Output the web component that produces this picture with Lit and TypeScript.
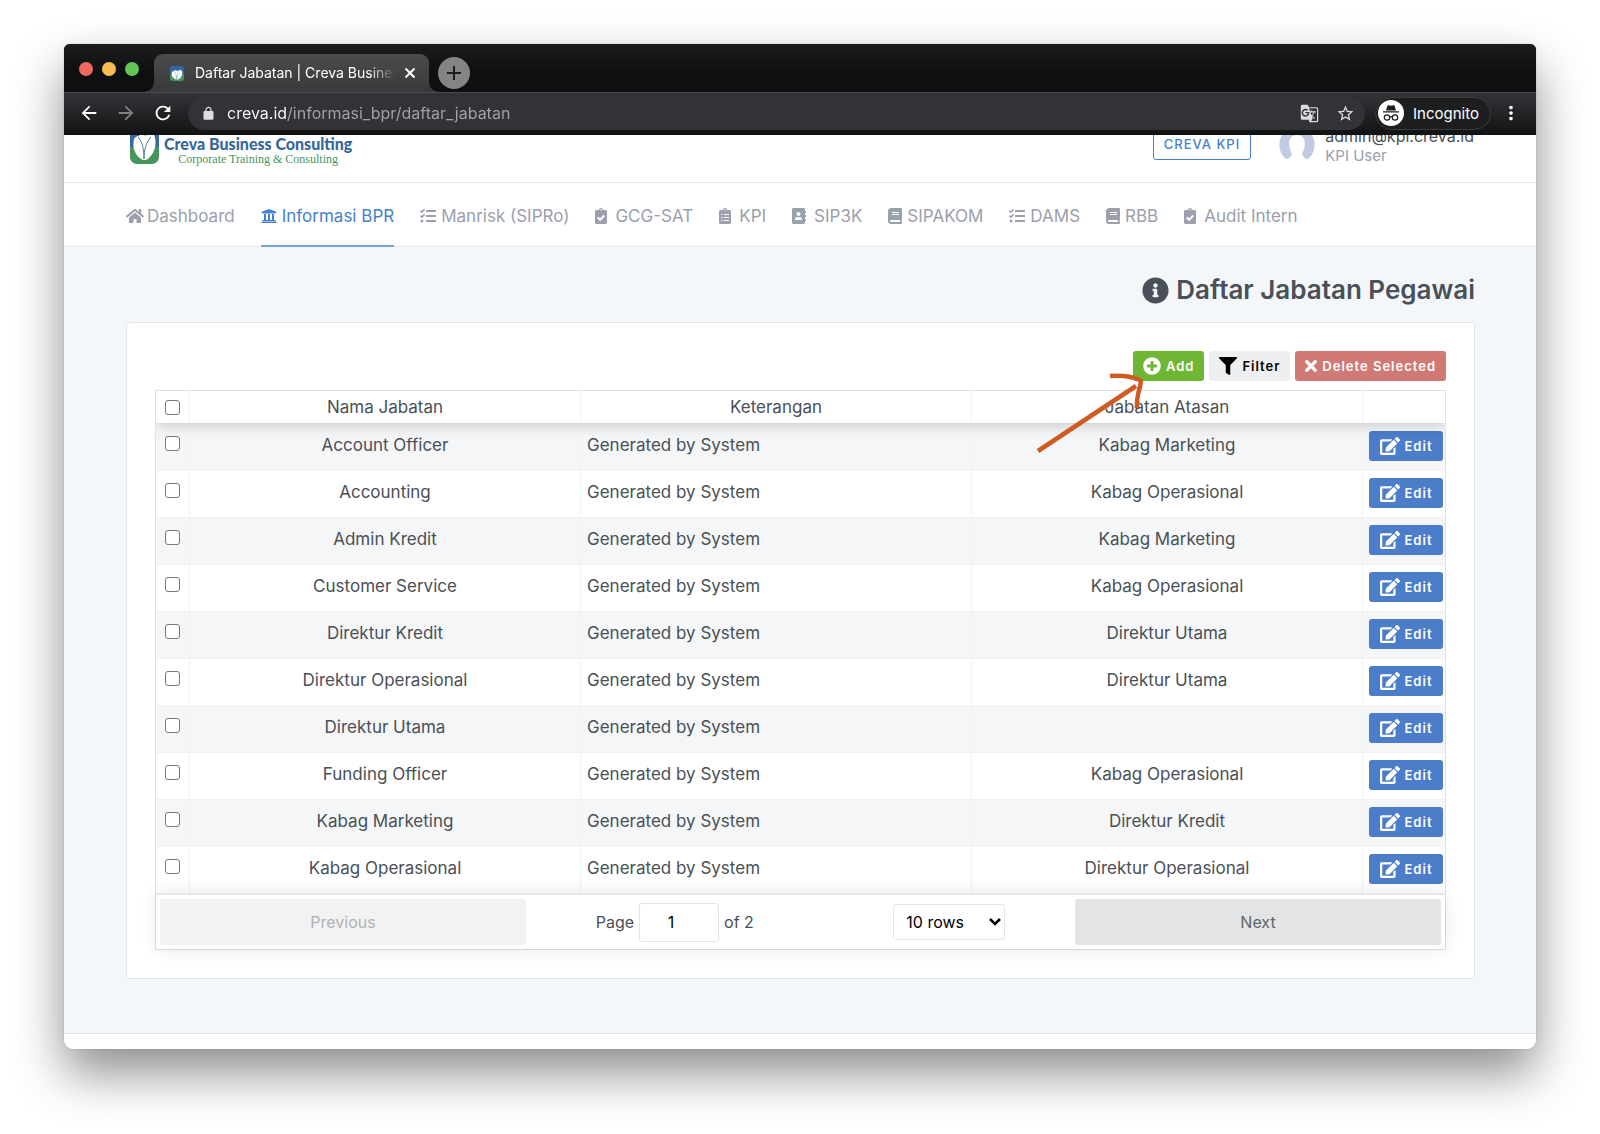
import { LitElement, html, css, svg, nothing } from "lit";
import { customElement, property, state } from "lit/decorators.js";
import { classMap } from "lit/directives/class-map.js";

type Glyph = { w: number; h: number; d: string };

const GLYPHS: Record<string, Glyph> = {
  home: { w: 576, h: 512, d: "M280.37 148.26L96 300.11V464a16 16 0 0 0 16 16l112.06-.29a16 16 0 0 0 15.92-16V368a16 16 0 0 1 16-16h64a16 16 0 0 1 16 16v95.64a16 16 0 0 0 16 16.05L464 480a16 16 0 0 0 16-16V300L295.67 148.26a12.19 12.19 0 0 0-15.3 0zM571.6 251.47L488 182.56V44.05a12 12 0 0 0-12-12h-56a12 12 0 0 0-12 12v72.61L318.47 43a48 48 0 0 0-61 0L4.34 251.47a12 12 0 0 0-1.6 16.9l25.5 31A12 12 0 0 0 45.15 301l235.22-193.74a12.19 12.19 0 0 1 15.3 0L530.9 301a12 12 0 0 0 16.9-1.6l25.5-31a12 12 0 0 0-1.7-16.93z" },
  bank: { w: 512, h: 512, d: "M496 128v16a8 8 0 0 1-8 8h-24v12c0 6.627-5.373 12-12 12H60c-6.627 0-12-5.373-12-12v-12H24a8 8 0 0 1-8-8v-16a8 8 0 0 1 4.941-7.392l232-88a7.996 7.996 0 0 1 6.118 0l232 88A8 8 0 0 1 496 128zm-24 304H40c-13.255 0-24 10.745-24 24v16a8 8 0 0 0 8 8h464a8 8 0 0 0 8-8v-16c0-13.255-10.745-24-24-24zM96 192v192H60c-6.627 0-12 5.373-12 12v20h416v-20c0-6.627-5.373-12-12-12h-36V192h-64v192h-64V192h-64v192h-64V192H96z" },
  tasks: { w: 512, h: 512, d: "M139.61 35.5a12 12 0 0 0-17 0L58.93 98.81l-22.7-22.12a12 12 0 0 0-17 0L3.53 92.41a12 12 0 0 0 0 17l47.59 47.4a12.78 12.78 0 0 0 17.61 0l15.59-15.62L156.52 69a12.09 12.09 0 0 0 .09-17zm0 159.19a12 12 0 0 0-17 0l-63.68 63.72-22.7-22.1a12 12 0 0 0-17 0L3.53 252a12 12 0 0 0 0 17L51 316.5a12.77 12.77 0 0 0 17.6 0l15.7-15.69 72.2-72.22a12 12 0 0 0 .09-16.9zM64 368c-26.49 0-48.59 21.5-48.59 48S37.53 464 64 464a48 48 0 0 0 0-96zm432 16H208a16 16 0 0 0-16 16v32a16 16 0 0 0 16 16h288a16 16 0 0 0 16-16v-32a16 16 0 0 0-16-16zm0-320H208a16 16 0 0 0-16 16v32a16 16 0 0 0 16 16h288a16 16 0 0 0 16-16V80a16 16 0 0 0-16-16zm0 160H208a16 16 0 0 0-16 16v32a16 16 0 0 0 16 16h288a16 16 0 0 0 16-16v-32a16 16 0 0 0-16-16z" },
  check: { w: 384, h: 512, d: "M336 64h-80c0-35.3-28.7-64-64-64s-64 28.7-64 64H48C21.5 64 0 85.5 0 112v352c0 26.5 21.5 48 48 48h288c26.5 0 48-21.5 48-48V112c0-26.5-21.5-48-48-48zM192 40c13.3 0 24 10.7 24 24s-10.7 24-24 24-24-10.7-24-24 10.7-24 24-24zm121.2 231.8l-143 141.8c-4.7 4.7-12.3 4.6-17-.1l-82.6-83.3c-4.7-4.7-4.6-12.3.1-17L99.1 285c4.7-4.7 12.3-4.6 17 .1l46 46.4 106-105.2c4.7-4.7 12.3-4.6 17 .1l28.2 28.4c4.7 4.8 4.6 12.3-.1 17z" },
  list: { w: 384, h: 512, d: "M336 64h-80c0-35.3-28.7-64-64-64s-64 28.7-64 64H48C21.5 64 0 85.5 0 112v352c0 26.5 21.5 48 48 48h288c26.5 0 48-21.5 48-48V112c0-26.5-21.5-48-48-48zM96 424c-13.3 0-24-10.7-24-24s10.7-24 24-24 24 10.7 24 24-10.7 24-24 24zm0-96c-13.3 0-24-10.7-24-24s10.7-24 24-24 24 10.7 24 24-10.7 24-24 24zm0-96c-13.3 0-24-10.7-24-24s10.7-24 24-24 24 10.7 24 24-10.7 24-24 24zm96-192c13.3 0 24 10.7 24 24s-10.7 24-24 24-24-10.7-24-24 10.7-24 24-24zm128 368c0 4.4-3.6 8-8 8H168c-4.4 0-8-3.6-8-8v-16c0-4.4 3.6-8 8-8h144c4.4 0 8 3.6 8 8v16zm0-96c0 4.4-3.6 8-8 8H168c-4.4 0-8-3.6-8-8v-16c0-4.4 3.6-8 8-8h144c4.4 0 8 3.6 8 8v16zm0-96c0 4.4-3.6 8-8 8H168c-4.4 0-8-3.6-8-8v-16c0-4.4 3.6-8 8-8h144c4.4 0 8 3.6 8 8v16z" },
  contacts: { w: 448, h: 512, d: "M436 160c6.6 0 12-5.4 12-12v-40c0-6.6-5.4-12-12-12h-20V48c0-26.5-21.5-48-48-48H48C21.5 0 0 21.5 0 48v416c0 26.5 21.5 48 48 48h320c26.5 0 48-21.5 48-48v-48h20c6.6 0 12-5.4 12-12v-40c0-6.6-5.4-12-12-12h-20v-64h20c6.6 0 12-5.4 12-12v-40c0-6.6-5.4-12-12-12h-20v-64h20zm-228-32c35.3 0 64 28.7 64 64s-28.7 64-64 64-64-28.7-64-64 28.7-64 64-64zm112 236.8c0 10.6-10 19.2-22.4 19.2H118.4C106 384 96 375.4 96 364.8v-19.2c0-31.8 30.1-57.6 67.2-57.6h5c12.3 5.1 25.7 8 39.8 8s27.6-2.9 39.8-8h5c37.1 0 67.2 25.8 67.2 57.6v19.2z" },
  book: { w: 448, h: 512, d: "M448 360V24c0-13.3-10.7-24-24-24H96C43 0 0 43 0 96v320c0 53 43 96 96 96h328c13.3 0 24-10.7 24-24v-16c0-7.5-3.5-14.3-8.9-18.7-4.2-15.4-4.2-59.3 0-74.7 5.4-4.3 8.9-11.1 8.9-18.6zM128 134c0-3.3 2.7-6 6-6h212c3.3 0 6 2.7 6 6v20c0 3.3-2.7 6-6 6H134c-3.3 0-6-2.7-6-6v-20zm0 64c0-3.3 2.7-6 6-6h212c3.3 0 6 2.7 6 6v20c0 3.3-2.7 6-6 6H134c-3.3 0-6-2.7-6-6v-20zm253.4 250H96c-17.7 0-32-14.3-32-32 0-17.6 14.4-32 32-32h285.4c-1.9 17.1-1.9 46.9 0 64z" },
  info: { w: 512, h: 512, d: "M256 8C119.043 8 8 119.083 8 256c0 136.997 111.043 248 248 248s248-111.003 248-248C504 119.083 392.957 8 256 8zm0 110c23.196 0 42 18.804 42 42s-18.804 42-42 42-42-18.804-42-42 18.804-42 42-42zm56 254c0 6.627-5.373 12-12 12h-88c-6.627 0-12-5.373-12-12v-24c0-6.627 5.373-12 12-12h12v-64h-12c-6.627 0-12-5.373-12-12v-24c0-6.627 5.373-12 12-12h64c6.627 0 12 5.373 12 12v100h12c6.627 0 12 5.373 12 12v24z" },
  plus: { w: 512, h: 512, d: "M256 8C119 8 8 119 8 256s111 248 248 248 248-111 248-248S393 8 256 8zm144 276c0 6.6-5.4 12-12 12h-92v92c0 6.6-5.4 12-12 12h-56c-6.6 0-12-5.4-12-12v-92h-92c-6.6 0-12-5.4-12-12v-56c0-6.6 5.4-12 12-12h92v-92c0-6.6 5.4-12 12-12h56c6.6 0 12 5.4 12 12v92h92c6.6 0 12 5.4 12 12v56z" },
  filter: { w: 512, h: 512, d: "M487.976 0H24.028C2.71 0-8.047 25.866 7.058 40.971L192 225.941V432c0 7.831 3.821 15.17 10.237 19.662l80 55.98C298.02 518.69 320 507.493 320 487.98V225.941l184.947-184.97C520.021 25.896 509.338 0 487.976 0z" },
  times: { w: 352, h: 512, d: "M242.72 256l100.07-100.07c12.28-12.28 12.28-32.19 0-44.48l-22.24-22.24c-12.28-12.28-32.19-12.28-44.48 0L176 189.28 75.93 89.21c-12.28-12.28-32.19-12.28-44.48 0L9.21 111.45c-12.28 12.28-12.28 32.19 0 44.48L109.28 256 9.21 356.07c-12.28 12.28-12.28 32.19 0 44.48l22.24 22.24c12.28 12.28 32.2 12.28 44.48 0L176 322.72l100.07 100.07c12.28 12.28 32.2 12.28 44.48 0l22.24-22.24c12.28-12.28 12.28-32.19 0-44.48L242.72 256z" },
  edit: { w: 576, h: 512, d: "M402.6 83.2l90.2 90.2c3.8 3.8 3.8 10 0 13.8L274.4 405.6l-92.8 10.3c-12.4 1.4-22.9-9.1-21.5-21.5l10.3-92.8L388.8 83.2c3.8-3.8 10-3.8 13.8 0zm162-22.9l-48.8-48.8c-15.2-15.2-39.9-15.2-55.2 0l-35.4 35.4c-3.8 3.8-3.8 10 0 13.8l90.2 90.2c3.8 3.8 10 3.8 13.8 0l35.4-35.4c15.2-15.3 15.2-40 0-55.2zM384 346.2V448H64V128h229.8c3.2 0 6.2-1.3 8.5-3.5l40-40c7.6-7.6 2.2-20.5-8.5-20.5H48C21.5 64 0 85.5 0 112v352c0 26.5 21.5 48 48 48h352c26.5 0 48-21.5 48-48V306.2c0-10.7-12.9-16-20.5-8.5l-40 40c-2.2 2.3-3.5 5.3-3.5 8.5z" },
  back: { w: 24, h: 24, d: "M20 11H7.83l5.59-5.59L12 4l-8 8 8 8 1.41-1.41L7.83 13H20v-2z" },
  forward: { w: 24, h: 24, d: "M12 4l-1.41 1.41L16.17 11H4v2h12.17l-5.58 5.59L12 20l8-8z" },
  reload: { w: 24, h: 24, d: "M17.65 6.35A7.958 7.958 0 0 0 12 4c-4.42 0-7.99 3.58-7.99 8s3.57 8 7.99 8c3.73 0 6.84-2.55 7.73-6h-2.08A5.99 5.99 0 0 1 12 18c-3.31 0-6-2.69-6-6s2.69-6 6-6c1.66 0 3.14.69 4.22 1.78L13 11h7V4l-2.35 2.35z" },
  lock: { w: 24, h: 24, d: "M18 8h-1V6c0-2.76-2.24-5-5-5S7 3.24 7 6v2H6c-1.1 0-2 .9-2 2v10c0 1.1.9 2 2 2h12c1.1 0 2-.9 2-2V10c0-1.1-.9-2-2-2zM9 6c0-1.66 1.34-3 3-3s3 1.34 3 3v2H9V6z" },
  star: { w: 24, h: 24, d: "M22 9.24l-7.19-.62L12 2 9.19 8.63 2 9.24l5.46 4.73L5.82 21 12 17.27 18.18 21l-1.63-7.03L22 9.24zM12 15.4l-3.76 2.27 1-4.28-3.32-2.88 4.38-.38L12 6.1l1.71 4.04 4.38.38-3.32 2.88 1 4.28L12 15.4z" },
  translate: { w: 24, h: 24, d: "M21 4H11l-1-3H3c-1.1 0-2 .9-2 2v15c0 1.1.9 2 2 2h8l1 3h9c1.1 0 2-.9 2-2V6c0-1.1-.9-2-2-2zM7 16c-2.76 0-5-2.24-5-5s2.24-5 5-5c1.35 0 2.48.5 3.35 1.3L9.03 8.57c-.38-.36-1.04-.78-2.03-.78-1.74 0-3.15 1.44-3.15 3.21S5.26 14.21 7 14.21c2.01 0 2.84-1.44 2.92-2.41H7v-1.71h4.68c.07.31.12.61.12 1.02C11.8 13.97 9.89 16 7 16zm6.17-5.42h3.7c-.43 1.25-1.11 2.43-2.05 3.47-.31-.35-.6-.72-.86-1.1l-.79-2.37zm8.33 9.92c0 .55-.45 1-1 1H14l2-2.5-1.04-3.1 3.1 3.1.92-.92-3.3-3.25.02-.02c1.13-1.25 1.93-2.69 2.4-4.22H20v-1.3h-4.53V8h-1.29v1.29h-1.44L11.46 5.5h9.04c.55 0 1 .45 1 1v14z" },
  more: { w: 24, h: 24, d: "M12 8c1.1 0 2-.9 2-2s-.9-2-2-2-2 .9-2 2 .9 2 2 2zm0 2c-1.1 0-2 .9-2 2s.9 2 2 2 2-.9 2-2-.9-2-2-2zm0 6c-1.1 0-2 .9-2 2s.9 2 2 2 2-.9 2-2-.9-2-2-2z" },
};

const icon = (name: string, size = 16) => {
  const g = GLYPHS[name];
  return html`<svg
    aria-hidden="true"
    viewBox="0 0 ${g.w} ${g.h}"
    width=${Math.round((size * g.w) / g.h)}
    height=${size}
    fill="currentColor"
  >
    <path d=${g.d}></path>
  </svg>`;
};

/* The rounded blue and green emblem, shared by the favicon and the site logo. */
const emblem = svg`
  <path fill="#35699f" d="M7 0h15a7 7 0 0 1 7 7v18H0V7a7 7 0 0 1 7-7z"></path>
  <path fill="#46955a" d="M0 25h29v10a7 7 0 0 1-7 7H7a7 7 0 0 1-7-7z"></path>
  <path fill="#fff" d="M13 38C5 34 2 26 4 17c1-2 3-3 5-3 1-3 5-5 8-4 4-1 8 2 8 6 2 9-2 18-9 22z"></path>
  <path fill="#35699f" d="M11 9c1 5 6 6 9 2l2-5-3 3-1-3c-3-2-7-1-7 3z"></path>
  <path fill="none" stroke="#4d7f93" d="M8 15c4 4 6 12 6 22 0-9 2-17 7-22"></path>
`;

const NAV = [
  { label: "Dashboard", icon: "home", tight: true },
  { label: "Informasi BPR", icon: "bank", active: true },
  { label: "Manrisk (SIPRo)", icon: "tasks" },
  { label: "GCG-SAT", icon: "check", wide: true },
  { label: "KPI", icon: "list", wide: true },
  { label: "SIP3K", icon: "contacts", wide: true },
  { label: "SIPAKOM", icon: "book" },
  { label: "DAMS", icon: "tasks" },
  { label: "RBB", icon: "book" },
  { label: "Audit Intern", icon: "check", wide: true },
];

const ROWS: [string, string][] = [
  ["Account Officer", "Kabag Marketing"],
  ["Accounting", "Kabag Operasional"],
  ["Admin Kredit", "Kabag Marketing"],
  ["Customer Service", "Kabag Operasional"],
  ["Direktur Kredit", "Direktur Utama"],
  ["Direktur Operasional", "Direktur Utama"],
  ["Direktur Utama", ""],
  ["Funding Officer", "Kabag Operasional"],
  ["Kabag Marketing", "Direktur Kredit"],
  ["Kabag Operasional", "Direktur Operasional"],
];

const base = css`
  :host, *, *::before, *::after { box-sizing: border-box; }
  svg { display: block; flex: none; }
  button, input, select { font: inherit; margin: 0; }
  button { border: 0; padding: 0; background: none; color: inherit; cursor: pointer; }
  a { color: inherit; text-decoration: none; }
`;

@customElement("browser-chrome")
export class BrowserChrome extends LitElement {
  static styles = [base, css`
    :host { display: block; color: #fff; background: #111214; }
    .strip { display: flex; align-items: flex-end; height: 48px; padding-left: 15px;
      background: linear-gradient(#1b1c1e, #0e0f11 60%); }
    .lights { display: flex; gap: 9px; align-self: center; padding-top: 2px; }
    .light { width: 14px; height: 14px; border-radius: 50%; }
    .close { background: #ee6a5f; }
    .mini { background: #f5bd4f; }
    .zoom { background: #61c454; }
    .tab { position: relative; display: flex; align-items: center; width: 275px; height: 38px; margin-left: 15px;
      padding: 0 13px 0 16px; border-radius: 9px 9px 0 0; background: linear-gradient(#4b4c4e, #38393b); }
    .tab::before, .tab::after { content: ""; position: absolute; bottom: 0; width: 9px; height: 9px; }
    .tab::before { left: -9px; background: radial-gradient(circle at 0 0, transparent 8px, #38393b 9px); }
    .tab::after { right: -9px; background: radial-gradient(circle at 100% 0, transparent 8px, #38393b 9px); }
    .title { flex: 1; min-width: 0; margin: 0 8px 0 11px; overflow: hidden; white-space: nowrap;
      font-size: 14px; line-height: 20px;
      -webkit-mask-image: linear-gradient(90deg, #000 calc(100% - 28px), transparent); }
    .new { display: grid; place-items: center; width: 32px; height: 32px; margin: 0 0 3px 9px;
      border-radius: 50%; background: #838486; color: #1b1c1e; }
    .bar { display: flex; align-items: center; height: 43px; padding: 0 14px 2px;
      border-top: 1px solid #4b4c4e; background: linear-gradient(#333437, #111213); }
    .keys { display: flex; gap: 15px; }
    .dim { color: #808183; }
    .omni { display: flex; flex: 1; align-items: center; height: 33px; margin: 0 10px 0 14px;
      padding: 0 10px 0 13px; border-radius: 17px; background: #323336; }
    .omni svg { color: #dcddde; }
    .url { flex: 1; min-width: 0; margin-left: 11px; padding: 0; border: 0; outline: 0; font-size: 16px; line-height: 24px;
      color: #fff; background: linear-gradient(90deg, #fff 60px, #a3a4a7 60px); -webkit-background-clip: text;
      background-clip: text; -webkit-text-fill-color: transparent; }
    .tools { display: flex; gap: 17px; }
    .pill { display: flex; align-items: center; gap: 9px; height: 33px; padding: 0 11px 0 2px;
      border: 1px solid #3a3b3d; border-radius: 17px; background: #1d1e20; font-size: 15px; }
    .menu { margin-left: 9px; }
  `];

  render() {
    return html`
      <div class="strip">
        <div class="lights">
          <span class="light close"></span><span class="light mini"></span><span class="light zoom"></span>
        </div>
        <div class="tab">
          <svg viewBox="0 0 29 42" width="14" height="15" preserveAspectRatio="none" aria-hidden="true">${emblem}</svg>
          <span class="title">Daftar Jabatan | Creva Business Consulting</span>
          <button aria-label="Close tab">
            <svg viewBox="0 0 12 12" width="12" height="12" stroke="#fff" stroke-width="2"><path d="M1.500 1.500l9 9M10.500 1.500l-9 9"></path></svg>
          </button>
        </div>
        <button class="new" aria-label="New tab">
          <svg viewBox="0 0 14 14" width="14" height="14" stroke="currentColor" stroke-width="2"><path d="M7 0v14M0 7h14"></path></svg>
        </button>
      </div>
      <div class="bar">
        <div class="keys">
          <button aria-label="Back">${icon("back", 22)}</button>
          <button class="dim" aria-label="Forward">${icon("forward", 22)}</button>
          <button aria-label="Reload">${icon("reload", 22)}</button>
        </div>
        <div class="omni">
          ${icon("lock", 15)}
          <input class="url" type="text" aria-label="Address" .value=${"creva.id/informasi_bpr/daftar_jabatan"} />
          <div class="tools">
            <button aria-label="Translate page">${icon("translate", 19)}</button>
            <button aria-label="Bookmark page">${icon("star", 19)}</button>
          </div>
        </div>
        <button class="pill">
          <svg viewBox="0 0 26 26" width="26" height="26" aria-hidden="true">
            <circle cx="13" cy="13" r="13" fill="#fff"></circle>
            <path fill="#1d1e20" d="M9.500 5.500c1.200-.8 2.200.3 3.500.3s2.300-1.100 3.500-.3l1.500 5H8zM5 11.300h16v1.200H5z"></path>
            <g fill="none" stroke="#1d1e20" stroke-width="1.200">
              <circle cx="9" cy="17.500" r="2.700"></circle><circle cx="17" cy="17.500" r="2.700"></circle>
              <path d="M11.700 17c.8-.6 1.800-.6 2.600 0"></path>
            </g>
          </svg>
          Incognito
        </button>
        <button class="menu" aria-label="Browser menu">${icon("more", 22)}</button>
      </div>
    `;
  }
}

@customElement("site-header")
export class SiteHeader extends LitElement {
  static styles = [base, css`
    :host { display: block; overflow: hidden; background: #fff; }
    .top { display: flex; align-items: center; justify-content: space-between; height: 78px; margin-top: -30px;
      padding: 0 62px 0 66px; border-bottom: 1px solid #e4eaed; }
    .logo { display: flex; gap: 5px; }
    .brand { display: flex; flex-direction: column; align-items: center; padding-top: 13px; }
    .name { font: 900 16px/18px Lato, sans-serif; color: #36679c; white-space: nowrap; }
    .tag { font: 12px/12px "Liberation Serif", serif; color: #46955a; white-space: nowrap; }
    .right { display: flex; align-items: center; }
    .kpi { height: 32px; margin-right: 28px; padding: 0 10px; border: 1px solid #467fcf; border-radius: 3px;
      color: #467fcf; font-size: 13px; font-weight: 500; letter-spacing: 1px; }
    .user { display: flex; align-items: center; gap: 10px; text-align: left; }
    .who { padding-top: 4px; }
    .mail { display: block; font-size: 16px; line-height: 20px; color: #495057; }
    .role { display: block; font-size: 15px; line-height: 20px; color: #9aa0ac; }
    .nav { display: flex; gap: 26px; height: 64px; padding: 0 62px; border-bottom: 1px solid #e4eaed; }
    .item { display: flex; align-items: center; gap: 5px; margin-bottom: -1px; padding-top: 4px; border-bottom: 2px solid transparent;
      font-size: 17px; line-height: 24px; color: #9aa0ac; white-space: nowrap; }
    .item.wide { gap: 8px; }
    .item.tight { gap: 3px; }
    .item.active { color: #467fcf; border-color: #78a2db; }
  `];

  render() {
    return html`
      <header class="top">
        <a class="logo" href="#" aria-label="Creva Business Consulting">
          <svg viewBox="0 0 29 42" width="29" height="42" aria-hidden="true">${emblem}</svg>
          <span class="brand">
            <span class="name">Creva Business Consulting</span>
            <span class="tag">Corporate Training &amp; Consulting</span>
          </span>
        </a>
        <div class="right">
          <button class="kpi">CREVA KPI</button>
          <button class="user">
            <svg viewBox="0 0 36 36" width="36" height="36" aria-hidden="true">
              <path fill="#c3cbe3" d="M7 33C-3 25-1 9 9 3c6-4 12-4 18 0 10 6 12 22 2 30-2 0-4-1-5-3-2-2 0-4 1-7 2-6 1-14-7-14s-9 8-7 14c1 3 3 5 1 7-1 2-3 3-5 3z"></path>
            </svg>
            <span class="who"><span class="mail">admin@kpi.creva.id</span><span class="role">KPI User</span></span>
          </button>
        </div>
      </header>
      <nav class="nav">
        ${NAV.map((n) => html`
          <a href="#" class=${classMap({ item: true, active: !!n.active, wide: !!n.wide, tight: !!n.tight })}>
            ${icon(n.icon)}<span>${n.label}</span>
          </a>`)}
      </nav>
    `;
  }
}

@customElement("position-table")
export class PositionTable extends LitElement {
  @property({ attribute: false }) rows: [string, string][] = [];
  @state() private selected = new Set<number>();

  static styles = [base, css`
    :host { display: block; border: 1px solid #dde2e5; }
    .clip { overflow: hidden; }
    table { width: 100%; table-layout: fixed; border-collapse: separate; border-spacing: 0; }
    .pick { width: 34px; }
    .act { width: 82px; }
    thead { position: relative; box-shadow: 0 2px 15px rgba(0, 0, 0, 0.2); }
    th { height: 32px; padding: 0 6px; font-weight: 400; vertical-align: middle; border-right: 1px solid #f0f2f3; }
    td { height: 47px; padding: 7px 6px 0; vertical-align: top; text-align: center; line-height: 28px;
      border-right: 1px solid #f0f2f3; border-top: 1px solid #f1f2f3; }
    th, td { font-size: 17px; }
    th:last-child, td:last-child { border-right: 0; }
    tbody tr:nth-child(odd) { background: #f5f6f7; }
    .left { text-align: left; }
    .box { display: block; width: 15px; height: 15px; margin: 5px 0 0 3px; appearance: none; background: #fff;
      border: 1px solid #76797c; border-radius: 3px; }
    .box:checked { background: #467fcf; }
    th .box { margin-top: 0; }
    td.do { padding-left: 6px; padding-right: 2px; }
    .edit { display: flex; align-items: center; justify-content: center; gap: 5px; width: 100%; height: 30px; border-radius: 3px;
      background: #4c7dc9; color: #fff; font-size: 13px; font-weight: 600; letter-spacing: 1px; }
    .pager { position: relative; display: flex; padding: 4px; border-top: 2px solid #e6e8ea;
      background: #fff; box-shadow: 0 0 15px rgba(0, 0, 0, 0.1); }
    .step { flex: 1; height: 46px; border-radius: 3px; background: #e3e4e6; color: #646566; font-size: 16px; }
    .step:disabled { background: #f1f2f3; color: #b1b2b4; cursor: default; }
    .mid { display: flex; flex: 1.5; align-items: center; justify-content: space-around; font-size: 16px; }
    .page { display: flex; align-items: center; gap: 5px; }
    .num { width: 80px; height: 39px; padding: 0 16px 0 0; border: 1px solid #e3e6e8; border-radius: 3px; text-align: center; color: #000; }
    .pick-size { display: flex; align-items: center; position: relative; }
    .size { width: 112px; height: 36px; padding: 0 12px; appearance: none; border: 1px solid #e3e6e8; border-radius: 3px;
      background: #fff; color: #000; }
    .caret { position: absolute; right: 4px; pointer-events: none; }
  `];

  private toggle(i: number) {
    const next = new Set(this.selected);
    next.has(i) ? next.delete(i) : next.add(i);
    this.selected = next;
  }

  render() {
    return html`
      <div class="clip"><table>
        <colgroup><col class="pick" /><col /><col /><col /><col class="act" /></colgroup>
        <thead>
          <tr>
            <th><input class="box" type="checkbox" aria-label="Select all" /></th>
            <th>Nama Jabatan</th><th>Keterangan</th><th>Jabatan Atasan</th><th></th>
          </tr>
        </thead>
        <tbody>
          ${this.rows.map(([name, parent], i) => html`
            <tr>
              <td><input class="box" type="checkbox" aria-label="Select ${name}"
                .checked=${this.selected.has(i)} @change=${() => this.toggle(i)} /></td>
              <td>${name}</td>
              <td class="left">Generated by System</td>
              <td>${parent || nothing}</td>
              <td class="do"><button class="edit">${icon("edit", 18)}Edit</button></td>
            </tr>`)}
        </tbody>
      </table></div>
      <div class="pager">
        <button class="step" disabled>Previous</button>
        <div class="mid">
          <label class="page">Page <input class="num" type="text" inputmode="numeric" value="1" aria-label="Page number" /> of 2</label>
          <div class="pick-size">
            <select class="size" aria-label="Rows per page"><option>10 rows</option><option>20 rows</option><option>50 rows</option></select>
            <svg class="caret" viewBox="0 0 12 12" width="12" height="12" fill="none" stroke="#000" stroke-width="2.500" aria-hidden="true"><path d="M1 3l5 5 5-5"></path></svg>
          </div>
        </div>
        <button class="step">Next</button>
      </div>
    `;
  }
}

@customElement("app-root")
export class AppRoot extends LitElement {
  static styles = [base, css`
    :host { display: block; min-height: 100vh; padding: 44px 64px 84px; overflow: hidden; background: #fff;
      color: #495057; font-family: Inter, "Liberation Sans", sans-serif; }
    .window { overflow: hidden; border-radius: 6px 6px 9px 9px; background: #fff;
      box-shadow: 0 0 1px rgba(0, 0, 0, 0.5), 0 24px 50px rgba(0, 0, 0, 0.45); }
    .page { padding: 25px 61px 54px 62px; border-bottom: 1px solid #dbe6ea; background: #f3f7fa; }
    .heading { display: flex; align-items: center; justify-content: flex-end; gap: 7px; margin: 0 0 14px;
      font-size: 26px; font-weight: 600; line-height: 36px; }
    .card { padding: 28px; border: 1px solid #e0e7eb; border-radius: 3px; background: #fff; }
    .actions { position: relative; display: flex; justify-content: flex-end; gap: 5px; margin-bottom: 9px; }
    .btn { display: flex; align-items: center; gap: 5px; height: 30px; padding: 0 10px; border-radius: 3px;
      color: #fff; font-size: 13px; font-weight: 600; letter-spacing: 1px; }
    .add { background: #70b635; }
    .filter { background: #eeeff1; color: #000; }
    .delete { background: #d17a75; }
    .arrow { position: absolute; z-index: 2; top: 20px; right: 300px; pointer-events: none; }
    .foot { height: 15px; background: #fff; }
  `];

  render() {
    return html`
      <div class="window">
        <browser-chrome></browser-chrome>
        <site-header></site-header>
        <main class="page">
          <h1 class="heading">${icon("info", 27)}Daftar Jabatan Pegawai</h1>
          <section class="card">
            <div class="actions">
              <button class="btn add">${icon("plus", 18)}Add</button>
              <button class="btn filter">${icon("filter", 18)}Filter</button>
              <button class="btn delete">${icon("times", 18)}Delete Selected</button>
              <svg class="arrow" viewBox="0 0 112 84" width="112" height="84" fill="none" stroke="#cf5b22" stroke-width="4.500" aria-hidden="true">
                <path d="M4 80L102 15"></path>
                <path d="M76 5C88 4 99 6 106 9c3 3-4 12-3 28"></path>
              </svg>
            </div>
            <position-table .rows=${ROWS}></position-table>
          </section>
        </main>
        <div class="foot"></div>
      </div>
    `;
  }
}
